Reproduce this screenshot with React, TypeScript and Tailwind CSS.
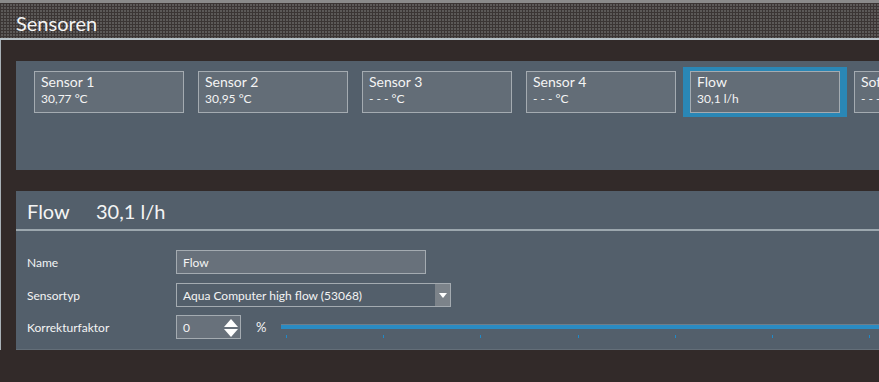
import React from 'react';

const sensors = [
  { name: 'Sensor 1', value: '30,77 °C' },
  { name: 'Sensor 2', value: '30,95 °C' },
  { name: 'Sensor 3', value: '- - - °C' },
  { name: 'Sensor 4', value: '- - - °C' },
  { name: 'Flow', value: '30,1 l/h', active: true },
  { name: 'Software Sensor 1', value: '- - - °C' },
];

function SensorCard({ name, value, active }: { name: string; value: string; active?: boolean }) {
  return (
    <div className="relative shrink-0">
      {active && <div className="absolute -inset-x-[7px] -inset-y-[4px] bg-[#2a87b6]" />}
      <div className="relative h-[42px] w-[150px] overflow-hidden whitespace-nowrap border border-[#a4abb1] bg-[#636d77] pl-[6px] pt-[1px]">
        <div className="text-[14px] leading-[18px]">{name}</div>
        <div className="text-[12px] leading-[16px]">{value}</div>
      </div>
    </div>
  );
}

function FormRow({ label, children, className }: { label: string; children: React.ReactNode; className?: string }) {
  return (
    <div className={`flex h-[24px] items-center ${className ?? ''}`}>
      <div className="w-[149px] shrink-0 pt-[2px] text-[12px]">{label}</div>
      {children}
    </div>
  );
}

export default function App() {
  return (
    <div className="h-[382px] w-[879px] overflow-hidden bg-[#322a29] font-['Lato',sans-serif] text-[#f4f4f4]">
      <div className="h-[3px] bg-[#8a8a8a]" />
      <div className="h-[35px] bg-[#5c5958] bg-[image:linear-gradient(90deg,#3b3534_1px,transparent_1px),linear-gradient(#3b3534_1px,transparent_1px)] bg-[length:3px_3px] pl-4 pt-[7px] text-[20px] leading-[26px]">
        Sensoren
      </div>
      <div className="h-[2px] bg-[#b7c1c7]" />

      <div className="border-l border-[#a9b1b7] pl-[15px] pt-[21px]">
        <div className="h-[109px] w-[900px] bg-[#535f6b] pl-[18px] pt-[10px]">
          <div className="flex gap-[14px]">
            {sensors.map((s) => (
              <SensorCard key={s.name} {...s} />
            ))}
          </div>
        </div>

        <div className="mt-[21px] h-[159px] w-[900px] border-b border-[#636e78] bg-[#535f6b]">
          <div className="flex h-[40px] border-b-2 border-[#9ca7ae] pl-[11px] pt-[7px] text-[20px] leading-[26px]">
            <span className="w-[69px]">Flow</span>
            <span>30,1 l/h</span>
          </div>

          <div className="flex flex-col pl-[11px]">
            <FormRow label="Name" className="mt-[19px]">
              <div className="flex h-[24px] w-[250px] items-center border border-[#a4abb1] bg-[#68717b] pl-[6px] pt-[1px] text-[12px]">
                Flow
              </div>
            </FormRow>

            <FormRow label="Sensortyp" className="mt-[9px]">
              <div className="flex h-[24px] w-[275px] items-stretch border border-[#a4abb1] bg-[#535f6b] text-[12px]">
                <div className="flex flex-1 items-center pl-[6px] pt-[1px]">Aqua Computer high flow (53068)</div>
                <div className="flex w-[15px] items-center justify-center bg-[#7c838a]">
                  <svg width="8" height="5" viewBox="0 0 8 5">
                    <path d="M0 0 H8 L4 5 Z" fill="#ffffff" />
                  </svg>
                </div>
              </div>
            </FormRow>

            <FormRow label="Korrekturfaktor" className="mt-[8px]">
              <div className="flex h-[24px] w-[65px] items-center justify-between border border-[#a4abb1] bg-[#68717b] pl-[6px] pr-[1px] pt-[1px] text-[12px]">
                <span>0</span>
                <svg width="16" height="20" viewBox="0 0 16 20">
                  <path d="M8 1 L15 9 H1 Z" fill="#ffffff" />
                  <path d="M1 11 H15 L8 19 Z" fill="#ffffff" />
                </svg>
              </div>
              <span className="ml-[15px] w-[25px] pt-[2px] text-[13px]">%</span>
              <div className="flex-1 pt-[7px]">
                <div className="h-[1px] bg-[#6f7d88]" />
                <div className="h-[4px] bg-[#2a8bc2]" />
                <div className="ml-[5px] mt-[6px] flex gap-[96.2px]">
                  {Array.from({ length: 7 }).map((_, i) => (
                    <div key={i} className="h-[3px] w-[1px] bg-[#2089c8]" />
                  ))}
                </div>
              </div>
            </FormRow>
          </div>
        </div>
      </div>
    </div>
  );
}
